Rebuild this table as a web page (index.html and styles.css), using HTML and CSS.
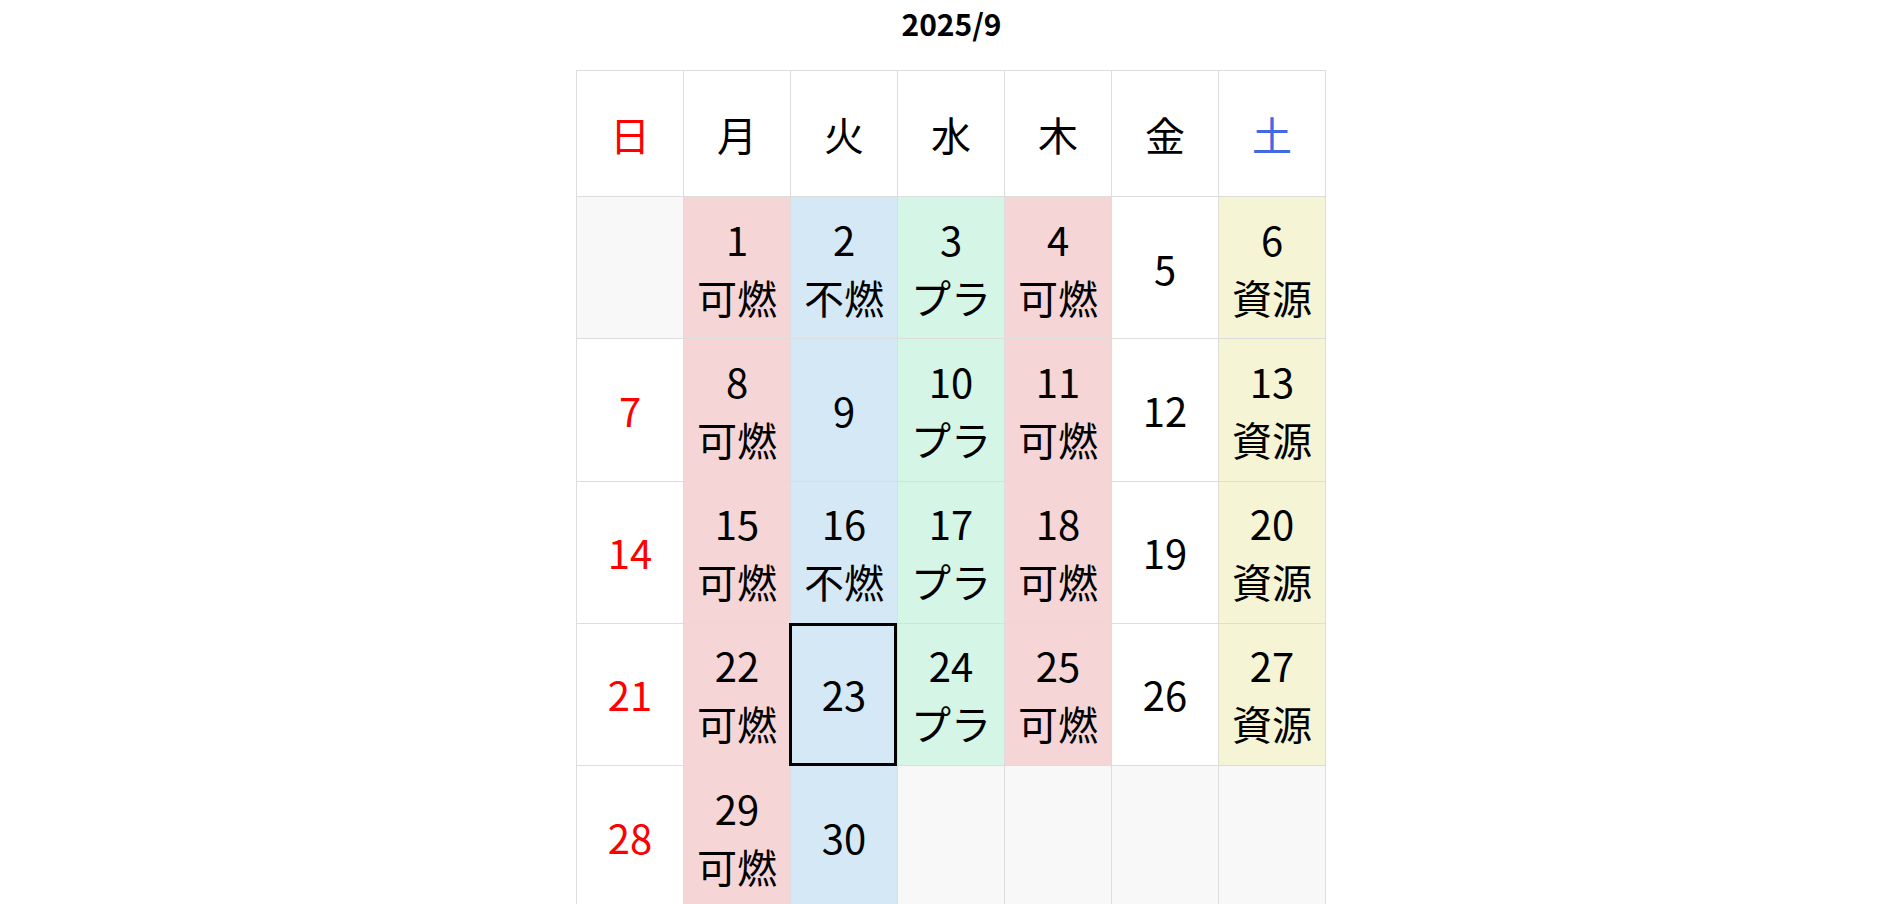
FILE: index.html
```html
<!DOCTYPE html>
<html lang="ja">
<head>
<meta charset="utf-8">
<title>2025/9</title>
<link rel="stylesheet" href="styles.css">
</head>
<body>
<h1 class="title">2025/9</h1>
<div class="calendar">
  <div class="cell head sun">日</div>
  <div class="cell head">月</div>
  <div class="cell head">火</div>
  <div class="cell head">水</div>
  <div class="cell head">木</div>
  <div class="cell head">金</div>
  <div class="cell head sat">土</div>

  <div class="cell empty"></div>
  <div class="cell burn"><span>1</span><span>可燃</span></div>
  <div class="cell nonburn"><span>2</span><span>不燃</span></div>
  <div class="cell plastic"><span>3</span><span>プラ</span></div>
  <div class="cell burn"><span>4</span><span>可燃</span></div>
  <div class="cell"><span>5</span></div>
  <div class="cell resource"><span>6</span><span>資源</span></div>

  <div class="cell sun"><span>7</span></div>
  <div class="cell burn"><span>8</span><span>可燃</span></div>
  <div class="cell nonburn"><span>9</span></div>
  <div class="cell plastic"><span>10</span><span>プラ</span></div>
  <div class="cell burn"><span>11</span><span>可燃</span></div>
  <div class="cell"><span>12</span></div>
  <div class="cell resource"><span>13</span><span>資源</span></div>

  <div class="cell sun"><span>14</span></div>
  <div class="cell burn"><span>15</span><span>可燃</span></div>
  <div class="cell nonburn"><span>16</span><span>不燃</span></div>
  <div class="cell plastic"><span>17</span><span>プラ</span></div>
  <div class="cell burn"><span>18</span><span>可燃</span></div>
  <div class="cell"><span>19</span></div>
  <div class="cell resource"><span>20</span><span>資源</span></div>

  <div class="cell sun"><span>21</span></div>
  <div class="cell burn"><span>22</span><span>可燃</span></div>
  <div class="cell nonburn today"><span>23</span></div>
  <div class="cell plastic"><span>24</span><span>プラ</span></div>
  <div class="cell burn"><span>25</span><span>可燃</span></div>
  <div class="cell"><span>26</span></div>
  <div class="cell resource"><span>27</span><span>資源</span></div>

  <div class="cell sun"><span>28</span></div>
  <div class="cell burn"><span>29</span><span>可燃</span></div>
  <div class="cell nonburn"><span>30</span></div>
  <div class="cell empty"></div>
  <div class="cell empty"></div>
  <div class="cell empty"></div>
  <div class="cell empty"></div>
</div>
</body>
</html>
```

FILE: styles.css
```css
html, body {
  margin: 0;
  padding: 0;
  background: #fff;
}

body {
  font-family: "Noto Sans CJK JP", "Noto Sans", sans-serif;
  color: #000;
}

.title {
  margin: 0 0 24px;
  font-size: 30px;
  line-height: 46px;
  font-weight: 700;
  text-align: center;
}

.calendar {
  width: 750px;
  margin: 0 0 0 calc(50% - 375.5px);
  display: grid;
  grid-template-columns: repeat(7, 107px);
  grid-template-rows: 126px repeat(5, 142.25px);
  border-left: 1px solid #ddd;
  border-top: 1px solid #ddd;
  box-sizing: border-box;
}

.cell {
  border-right: 1px solid #ddd;
  border-bottom: 1px solid #ddd;
  display: flex;
  flex-direction: column;
  align-items: center;
  justify-content: center;
  font-size: 40px;
  line-height: normal;
  background: #fff;
  position: relative;
}

.sun { color: #ff0000; }
.sat { color: #4169e1; }

.empty { background: #f8f8f8; }
.burn { background: #f5d5d5; }
.nonburn { background: #d5e8f5; }
.plastic { background: #d5f5e6; }
.resource { background: #f5f5d5; }

.today::after {
  content: "";
  position: absolute;
  top: -1px;
  left: -2px;
  right: 0;
  bottom: -1px;
  border: 3px solid #000;
  pointer-events: none;
}
```
